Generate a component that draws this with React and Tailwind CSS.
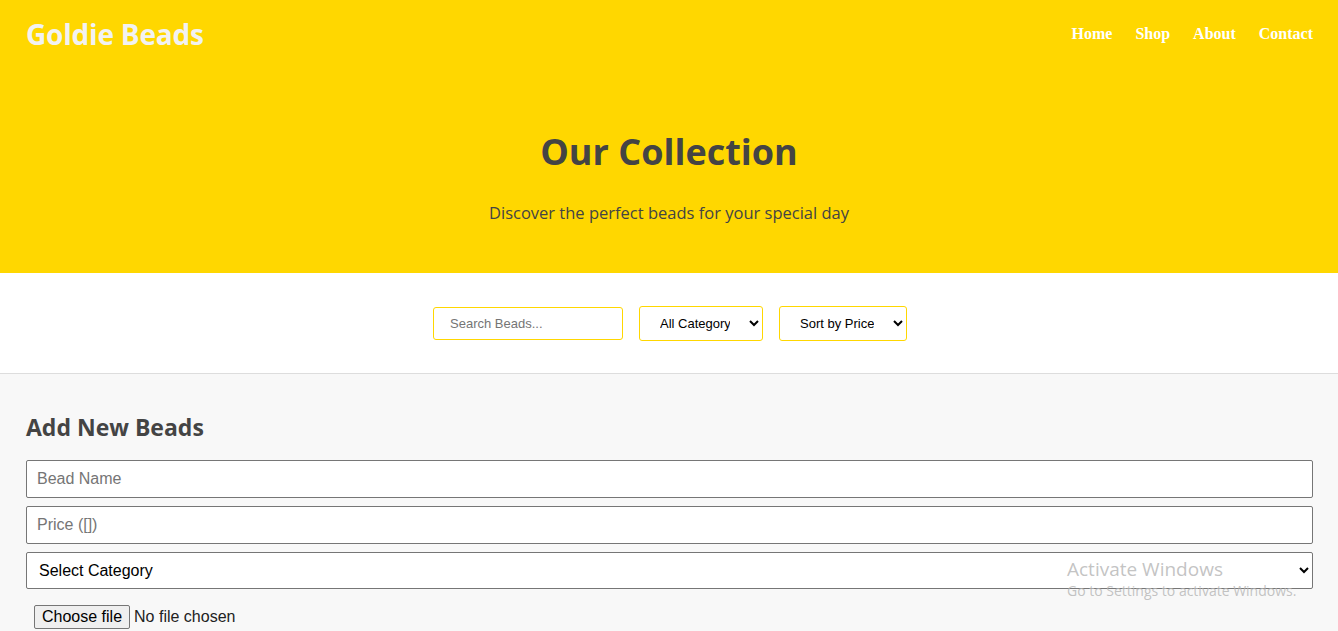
import React from "react";

function App() {
  return (
    <div className="relative min-h-[631px] bg-[#f8f8f8] font-['Open_Sans',sans-serif]">
      {/* Header + hero */}
      <header className="bg-[#ffd700]">
        <nav className="h-[68px] pl-[26px] pr-[25px] flex items-center justify-between">
          <h1 className="text-[28px] font-bold text-[#f2f2f2] tracking-[-0.2px]">
            Goldie Beads
          </h1>
          <ul className="flex gap-[23px] font-['Liberation_Serif',serif] font-bold text-[16px] text-white">
            <li>
              <a href="#">Home</a>
            </li>
            <li>
              <a href="#">Shop</a>
            </li>
            <li>
              <a href="#">About</a>
            </li>
            <li>
              <a href="#">Contact</a>
            </li>
          </ul>
        </nav>
        <div className="pt-[60px] pb-[47px] text-center text-[#444]">
          <h2 className="text-[36px] leading-[48px] font-bold">Our Collection</h2>
          <p className="mt-[23px] text-[16.5px] leading-[27px]">
            Discover the perfect beads for your special day
          </p>
        </div>
      </header>

      {/* Filters */}
      <div className="h-[101px] pl-[2px] bg-white border-b border-[#ddd] flex items-center justify-center gap-4 font-['Liberation_Sans',sans-serif] text-[13px]">
        <input
          type="text"
          placeholder="Search Beads..."
          className="w-[190px] h-[33px] px-4 border border-[#ffd700] rounded-[3px] bg-white placeholder:text-[#757575] outline-none"
        />
        <select className="w-[124px] h-[35px] px-4 border border-[#ffd700] rounded-[3px] bg-white text-black appearance-auto">
          <option>All Category</option>
        </select>
        <select className="w-[128px] h-[35px] px-4 border border-[#ffd700] rounded-[3px] bg-white text-black appearance-auto">
          <option>Sort by Price</option>
        </select>
      </div>

      {/* Add form */}
      <section className="pl-[26px] pr-[25px] pt-[37px] pb-4">
        <h3 className="text-[23px] leading-[32px] font-bold text-[#444] mb-[17px]">
          Add New Beads
        </h3>
        <form className="flex flex-col gap-2 font-['Liberation_Sans',sans-serif] text-[16px]">
          <input
            type="text"
            placeholder="Bead Name"
            className="h-[38px] px-[10px] border border-[#767676] rounded-[2px] bg-white placeholder:text-[#757575] outline-none"
          />
          <input
            type="text"
            placeholder="Price ([])"
            className="h-[38px] px-[10px] border border-[#767676] rounded-[2px] bg-white placeholder:text-[#757575] outline-none"
          />
          <select className="h-[37px] px-[8px] border border-[#767676] rounded-[2px] bg-white text-black appearance-auto">
            <option>Select Category</option>
          </select>
          <label className="mt-2 ml-2 flex items-center gap-[4px] text-[16px] text-[#222] cursor-pointer">
            <span className="h-[24px] px-[7px] flex items-center border border-[#767676] rounded-[2px] bg-[#efefef] text-black">
              Choose file
            </span>
            <span>No file chosen</span>
            <input type="file" className="hidden" />
          </label>
        </form>
      </section>

      {/* OS watermark */}
      <div className="absolute left-[1067px] top-[556px] pointer-events-none text-[#b4b4b4]/80 font-['Open_Sans',sans-serif]">
        <div className="text-[19px] leading-[26px]">Activate Windows</div>
        <div className="text-[14px] leading-[20px] -mt-[1px]">Go to Settings to activate Windows.</div>
      </div>
    </div>
  );
}

export default App;
